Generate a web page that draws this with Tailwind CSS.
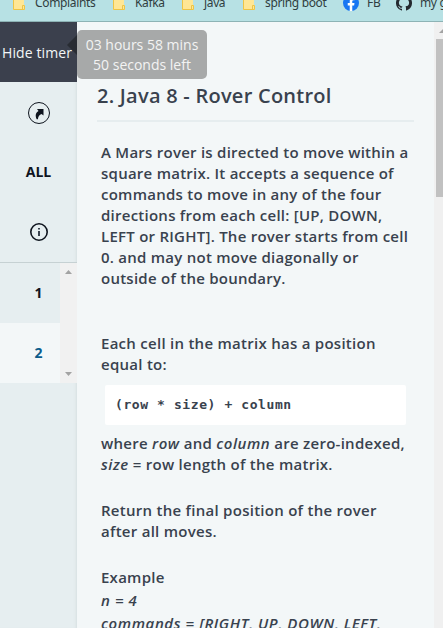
<!DOCTYPE html>
<html lang="en">
<head>
<meta charset="utf-8">
<title>Rover Control</title>
<script src="https://cdn.jsdelivr.net/npm/@tailwindcss/browser@4"></script>
</head>
<body class="w-[443px] h-[628px] overflow-hidden bg-[#f3f7f8] font-['Open_Sans',sans-serif] text-[#39424e] flex flex-col">
<header class="relative h-[22px] shrink-0 bg-[#b7e1e4] border-b border-[#8db3b5] overflow-hidden text-[12px] leading-4 text-[#303e40] font-['Noto_Sans',sans-serif] tracking-[-0.35px] whitespace-nowrap">
  <div class="flex h-full -mt-[5px]">
    <div class="flex shrink-0 w-[100px] pl-[13px] gap-[10px]"><svg class="w-3 h-[15px] shrink-0" viewBox="0 0 12 15"><path d="M0 0h11v10h1v5H0z" fill="#ffe694"/><path d="M.5 0v14.500h11v-4h-2v4" fill="none" stroke="#edc446"/></svg><span>Complaints</span></div>
    <div class="flex shrink-0 w-[69px] pl-[13px] gap-[10px]"><svg class="w-3 h-[15px] shrink-0" viewBox="0 0 12 15"><path d="M0 0h11v10h1v5H0z" fill="#ffe694"/><path d="M.5 0v14.500h11v-4h-2v4" fill="none" stroke="#edc446"/></svg><span>Kafka</span></div>
    <div class="flex shrink-0 w-[61px] pl-[13px] gap-[10px]"><svg class="w-3 h-[15px] shrink-0" viewBox="0 0 12 15"><path d="M0 0h11v10h1v5H0z" fill="#ffe694"/><path d="M.5 0v14.500h11v-4h-2v4" fill="none" stroke="#edc446"/></svg><span>java</span></div>
    <div class="flex shrink-0 w-[113px] pl-[13px] gap-[10px]"><svg class="w-3 h-[15px] shrink-0" viewBox="0 0 12 15"><path d="M0 0h11v10h1v5H0z" fill="#ffe694"/><path d="M.5 0v14.500h11v-4h-2v4" fill="none" stroke="#edc446"/></svg><span>spring boot</span></div>
    <div class="flex shrink-0 w-[53px] gap-2"><svg class="size-4 shrink-0" viewBox="0 0 24 24"><circle cx="12" cy="12" r="12" fill="#1877f2"/><path fill="#fff" d="M10.100 24v-8.400H7.100v-3.500h3V9.400c0-3 1.800-4.700 4.600-4.700 1.300 0 2.600.2 2.600.2v3h-1.500c-1.500 0-1.900.9-1.900 1.900v2.300h3.300l-.5 3.500h-2.800V24z"/></svg><span>FB</span></div>
    <div class="flex shrink-0 gap-2"><svg class="size-4 shrink-0" viewBox="0 0 16 16"><path fill="#24292f" d="M8 0a8 8 0 0 0-2.500 15.600c.4.1.5-.2.5-.4v-1.500c-2.200.5-2.700-.9-2.700-.9-.4-.9-.9-1.200-.9-1.200-.7-.5.1-.5.1-.5.8.1 1.200.8 1.200.8.700 1.200 1.900.9 2.300.7.1-.5.3-.9.5-1.100-1.800-.2-3.600-.9-3.600-3.900 0-.9.3-1.600.8-2.200-.1-.2-.4-1 .1-2.100 0 0 .7-.2 2.200.8a7.700 7.700 0 0 1 4 0c1.500-1 2.200-.8 2.200-.8.5 1.100.2 1.900.1 2.100.5.6.8 1.300.8 2.200 0 3.100-1.900 3.700-3.700 3.900.3.3.6.8.6 1.500v2.200c0 .2.100.5.5.4A8 8 0 0 0 8 0"/></svg><span>my g</span></div>
  </div>
</header>
<div class="flex flex-1 min-h-0">
  <aside class="w-[77px] shrink-0 bg-[#e6eef0] shadow-[inset_-3px_0_3px_-2px_#d6dfe1] flex flex-col text-[#0e141e] relative">
    <div class="relative z-10 h-[60px] shrink-0 bg-[#3b404d] text-[#f3f7f7] text-[14px] leading-[20px] flex items-center pl-[2px] pt-[2px] tracking-[0.1px] whitespace-nowrap">Hide timer
      <div class="absolute left-[67px] top-[13px] border-y-[10px] border-y-transparent border-r-[10px] border-r-[#282c33]"></div>
      <div class="absolute left-[77px] top-[8px] w-[130px] h-[49px] rounded-[5px] bg-[#a7a9a9] text-[#f3f3f3] text-[14px] leading-[20px] tracking-normal text-center pt-[5px]">03 hours 58 mins<br>50 seconds left</div>
    </div>
    <div class="h-[61px] flex items-center justify-center"><svg class="size-[22px] ml-px" viewBox="0 0 22 22"><circle cx="11" cy="11" r="10.500" fill="none" stroke="#0e141e" stroke-width="1"/><path fill="#0e141e" d="M9 7h6.500v6.500l-2-1.500c-2 .7-3.300 2-3.600 5.300H8.700C7 13.500 7.500 11 10.500 9z"/></svg></div>
    <div class="h-[58px] flex items-center justify-center pb-[2px] text-[14px] font-bold">ALL</div>
    <div class="h-[62px] border-b border-[#c6d1d3] flex items-center justify-center"><svg class="size-[18px] ml-px" viewBox="0 0 18 18"><circle cx="9" cy="9" r="8.200" fill="none" stroke="#0e141e" stroke-width="1.600"/><path fill="#39424e" d="M8 5h2v1.500H8zM8 8h2v5H8z"/></svg></div>
    <div class="flex h-[120px] text-[14px] font-bold">
      <div class="w-[60px]">
        <div class="h-[60px] pl-[34.500px] leading-[60px]">1</div>
        <div class="h-[60px] pl-[34.500px] leading-[60px] bg-[#f3f7f8] text-[#0b5c8b]">2</div>
      </div>
      <div class="w-[17px] bg-[#f1f1f1] flex flex-col items-center justify-between py-[7px]">
        <svg class="w-[7px] h-[4px]" viewBox="0 0 7 4"><path d="M3.500 0L7 4H0z" fill="#a3a3a3"/></svg>
        <svg class="w-[7px] h-[4px]" viewBox="0 0 7 4"><path d="M0 0h7L3.500 4z" fill="#a3a3a3"/></svg>
      </div>
    </div>
  </aside>
  <main class="w-[357px] shrink-0 pl-5 overflow-hidden text-[15px] leading-[21px] font-semibold tracking-[0.25px] whitespace-nowrap">
    <h1 class="mt-[60px] h-[38px] text-[20px] leading-[28px]">2. Java 8 - Rover Control</h1>
    <div class="w-[317px] h-[2px] bg-[#e6edef]"></div>
    <div class="pl-1">
      <p class="mt-[20px]">A Mars rover is directed to move within a<br>square matrix. It accepts a sequence of<br>commands to move in any of the four<br>directions from each cell: [UP, DOWN,<br>LEFT or RIGHT]. The rover starts from cell<br>0. and may not move diagonally or<br>outside of the boundary.</p>
      <p class="mt-[44px] tracking-[0.27px]">Each cell in the matrix has a position<br>equal to:</p>
      <pre class="mt-[10px] ml-1 w-[301px] h-[40px] rounded-[2px] bg-white pl-[10px] text-[13px] leading-[40px] tracking-[0.59px] font-bold font-['DejaVu_Sans_Mono',monospace]">(row * size) + column</pre>
      <p class="mt-[8px] tracking-[0.27px]">where <em class="tracking-[0.5px]">row</em> and <em class="tracking-[0.5px]">column</em> are zero-indexed,<br><em class="tracking-[0.5px]">size</em> = row length of the matrix.</p>
      <p class="mt-[25px] tracking-[0.27px]">Return the final position of the rover<br>after all moves.</p>
      <p class="mt-[25px]">Example</p>
      <p class="mt-px leading-[23px] italic tracking-[0.58px]">n = 4<br>commands = [RIGHT, UP, DOWN, LEFT,</p>
    </div>
  </main>
  <div class="w-[9px] shrink-0 bg-[#f0f0f0] pl-[2px] overflow-hidden">
    <svg class="ml-[3px] mt-[7px] w-2 h-[4px]" viewBox="0 0 8 4"><path d="M4 0l4 4H0z" fill="#a3a3a3"/></svg>
    <div class="mt-[6px] w-[15px] h-[158px] bg-[#c1c1c1]"></div>
  </div>
</div>
</body>
</html>
